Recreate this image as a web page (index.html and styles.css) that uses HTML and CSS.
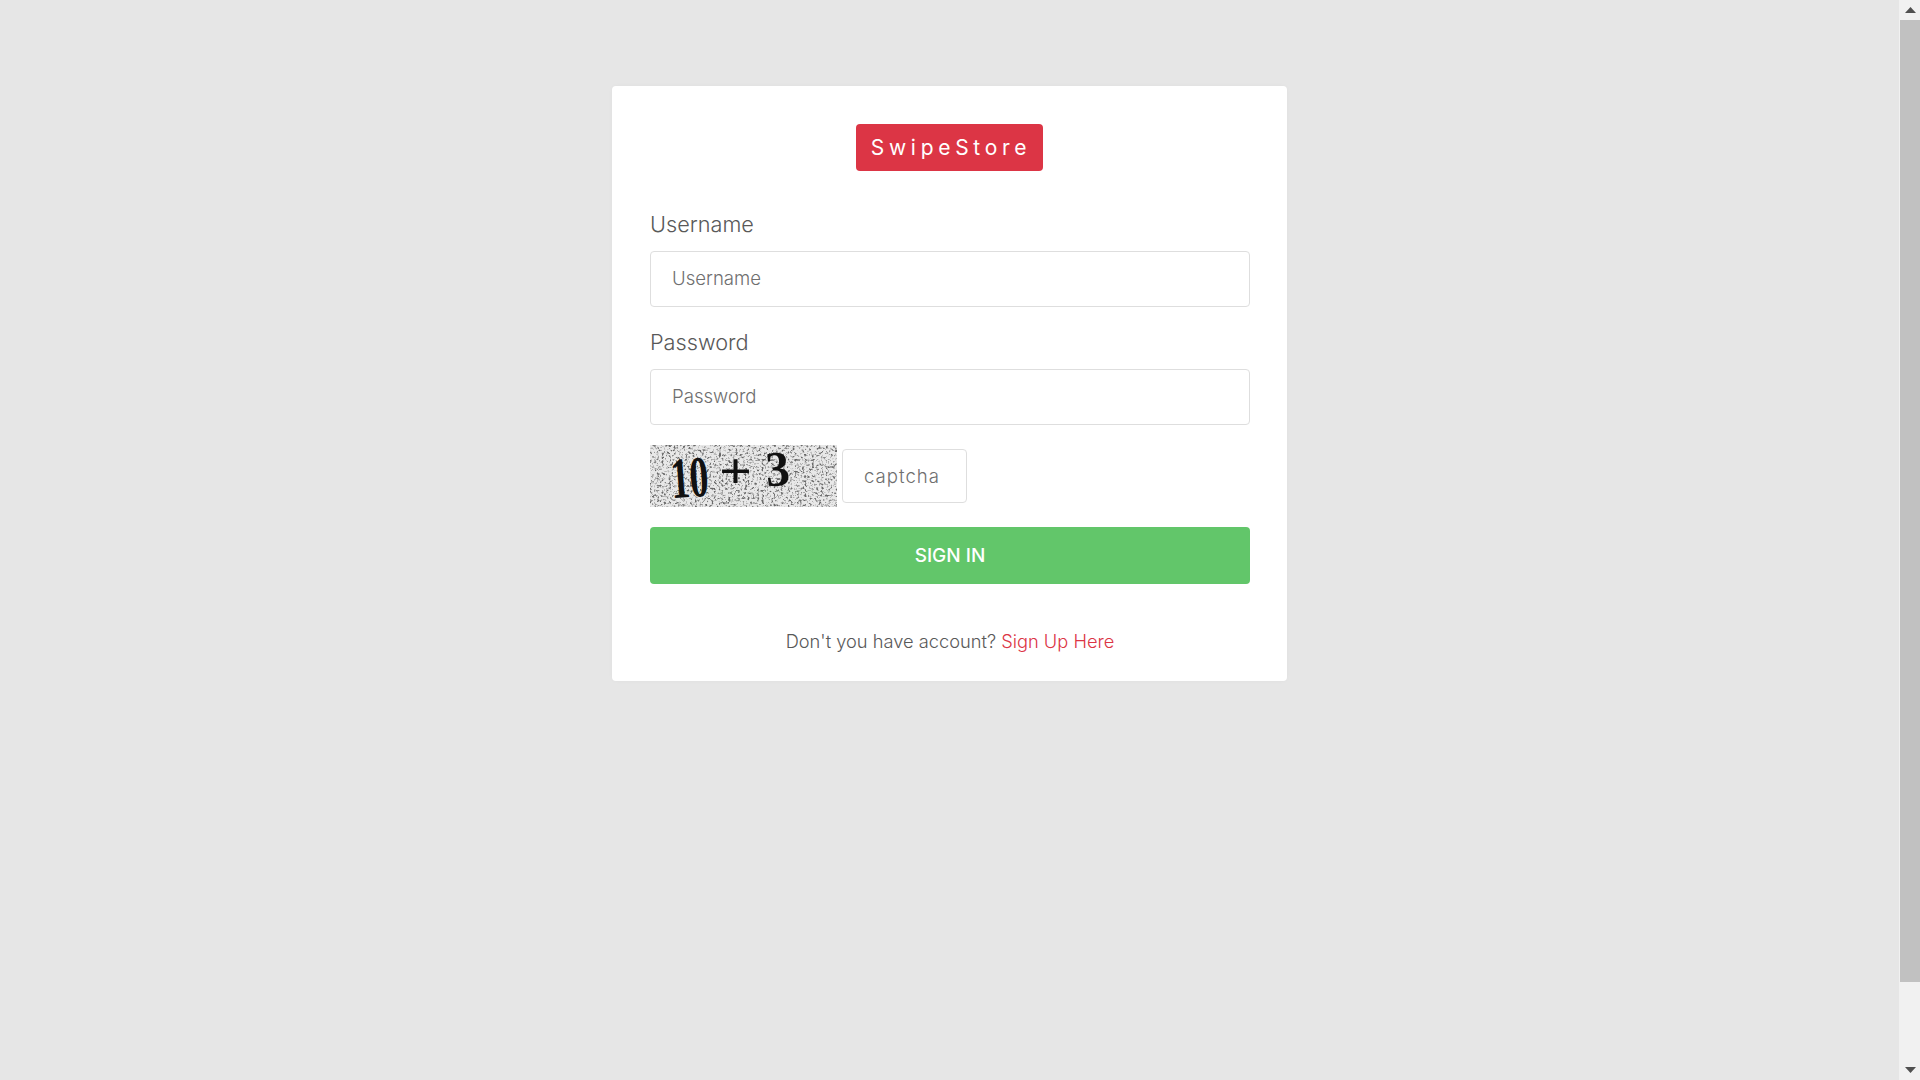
FILE: index.html
```html
<!DOCTYPE html>
<html lang="en">
<head>
    <meta charset="UTF-8">
    <meta name="viewport" content="width=device-width, initial-scale=1.0">
    <title>SwipeStore - Sign In</title>
    <link rel="stylesheet" href="styles.css">
</head>
<body>
    <div id="wrapper">
        <div class="page">
            <form class="card">
                <div class="logo-row">
                    <a class="logo" href="#">SwipeStore</a>
                </div>
                <div class="field">
                    <label for="username">Username</label>
                    <input id="username" class="input" type="text" placeholder="Username">
                </div>
                <div class="field">
                    <label for="password">Password</label>
                    <input id="password" class="input" type="text" placeholder="Password">
                </div>
                <div class="captcha-row">
                    <svg class="captcha" viewBox="0 0 187 62" width="187" height="62">
                        <defs>
                            <filter id="noise" x="0" y="0" width="100%" height="100%">
                                <feTurbulence type="fractalNoise" baseFrequency="0.42" numOctaves="3" seed="7"/>
                                <feColorMatrix type="matrix" values="0 0 0 0 0  0 0 0 0 0  0 0 0 0 0  3 3 0 0 -3"/>
                                <feGaussianBlur stdDeviation="0.35"/>
                            </filter>
                        </defs>
                        <rect width="187" height="62" fill="#e8e8e8"/>
                        <rect width="187" height="62" filter="url(#noise)" opacity="0.55"/>
                        <g class="captcha-text">
                            <text x="21" y="52" font-size="58" transform="rotate(-4 40 40)" textLength="38" lengthAdjust="spacingAndGlyphs">10</text>
                            <text x="69" y="43" font-size="50" textLength="33" lengthAdjust="spacingAndGlyphs">+</text>
                            <text x="116" y="41" font-size="50" transform="rotate(-4 125 30)" textLength="24" lengthAdjust="spacingAndGlyphs">3</text>
                        </g>
                    </svg>
                    <input class="input captcha-input" type="text" placeholder="captcha">
                </div>
                <button class="btn" type="button">SIGN IN</button>
                <p class="signup">Don't you have account? <a href="#">Sign Up Here</a></p>
            </form>
        </div>
        <div class="scrollbar">
            <div class="arrow"><svg width="11" height="6" viewBox="0 0 11 6"><path d="M5.5 0 11 6H0z" fill="#505050"/></svg></div>
            <div class="thumb"></div>
            <div class="arrow"><svg width="11" height="6" viewBox="0 0 11 6"><path d="M0 0h11L5.5 6z" fill="#505050"/></svg></div>
        </div>
    </div>
</body>
</html>
```

FILE: styles.css
```css
*{
    margin: 0;
    padding: 0;
    box-sizing: border-box;
}
body{
    font-family: Inter, "Open Sans", sans-serif;
    color: #595959;
    background-color: #e6e6e6;
}
#wrapper{
    height: 100vh;
    display: flex;
    overflow: hidden;
}
.page{
    flex: 1;
    padding-top: 86px;
}
.card{
    width: 675px;
    margin: 0 auto;
    padding: 38px 37px 25px 38px;
    background-color: white;
    border-radius: 4px;
    box-shadow: 0px 0px 4px rgba(0, 0, 0, 0.03);
}
.logo-row{
    display: flex;
    justify-content: center;
    margin-right: 1px;
    margin-bottom: 38px;
}
.logo{
    width: 187px;
    height: 47px;
    display: flex;
    align-items: center;
    justify-content: center;
    padding-left: 3px;
    font-size: 21px;
    letter-spacing: 4.7px;
    color: white;
    text-decoration: none;
    background-color: #dc3545;
    border-radius: 4px;
}
.field{
    margin-bottom: 20px;
}
.field label{
    display: block;
    height: 34px;
    margin-bottom: 8px;
    font-size: 21.7px;
    font-weight: 300;
    line-height: 31px;
}
.input{
    display: block;
    width: 100%;
    height: 56px;
    padding: 0 21px 2px;
    font-family: inherit;
    font-size: 18.6px;
    font-weight: 300;
    color: #595959;
    background-color: white;
    border: 1px solid #dedede;
    border-radius: 4px;
    outline: none;
}
.input::placeholder{
    color: #6f6f6f;
    opacity: 1;
}
.captcha-row{
    display: flex;
    align-items: center;
    gap: 5px;
    margin-bottom: 20px;
}
.captcha{
    display: block;
    overflow: visible;
}
.captcha-text{
    font-family: "Liberation Serif", serif;
    font-weight: bold;
    fill: #111;
}
.captcha-input{
    width: 125px;
    height: 54px;
    padding-bottom: 0;
    letter-spacing: 1px;
}
.btn{
    display: block;
    width: 100%;
    height: 57px;
    font-family: inherit;
    font-size: 19px;
    font-weight: 500;
    color: white;
    background-color: #62c66a;
    border: none;
    border-radius: 4px;
}
.signup{
    margin-top: 42px;
    font-size: 18.25px;
    font-weight: 300;
    line-height: 30px;
    text-align: center;
}
.signup a{
    color: #dc3545;
    text-decoration: none;
}
.scrollbar{
    width: 21px;
    display: flex;
    flex-direction: column;
    padding-left: 1px;
    background-color: #f1f1f1;
}
.arrow{
    height: 20px;
    display: flex;
    align-items: center;
    justify-content: center;
}
.thumb{
    height: 962px;
    background-color: #c1c1c1;
}
.arrow:last-child{
    margin-top: auto;
}
```
